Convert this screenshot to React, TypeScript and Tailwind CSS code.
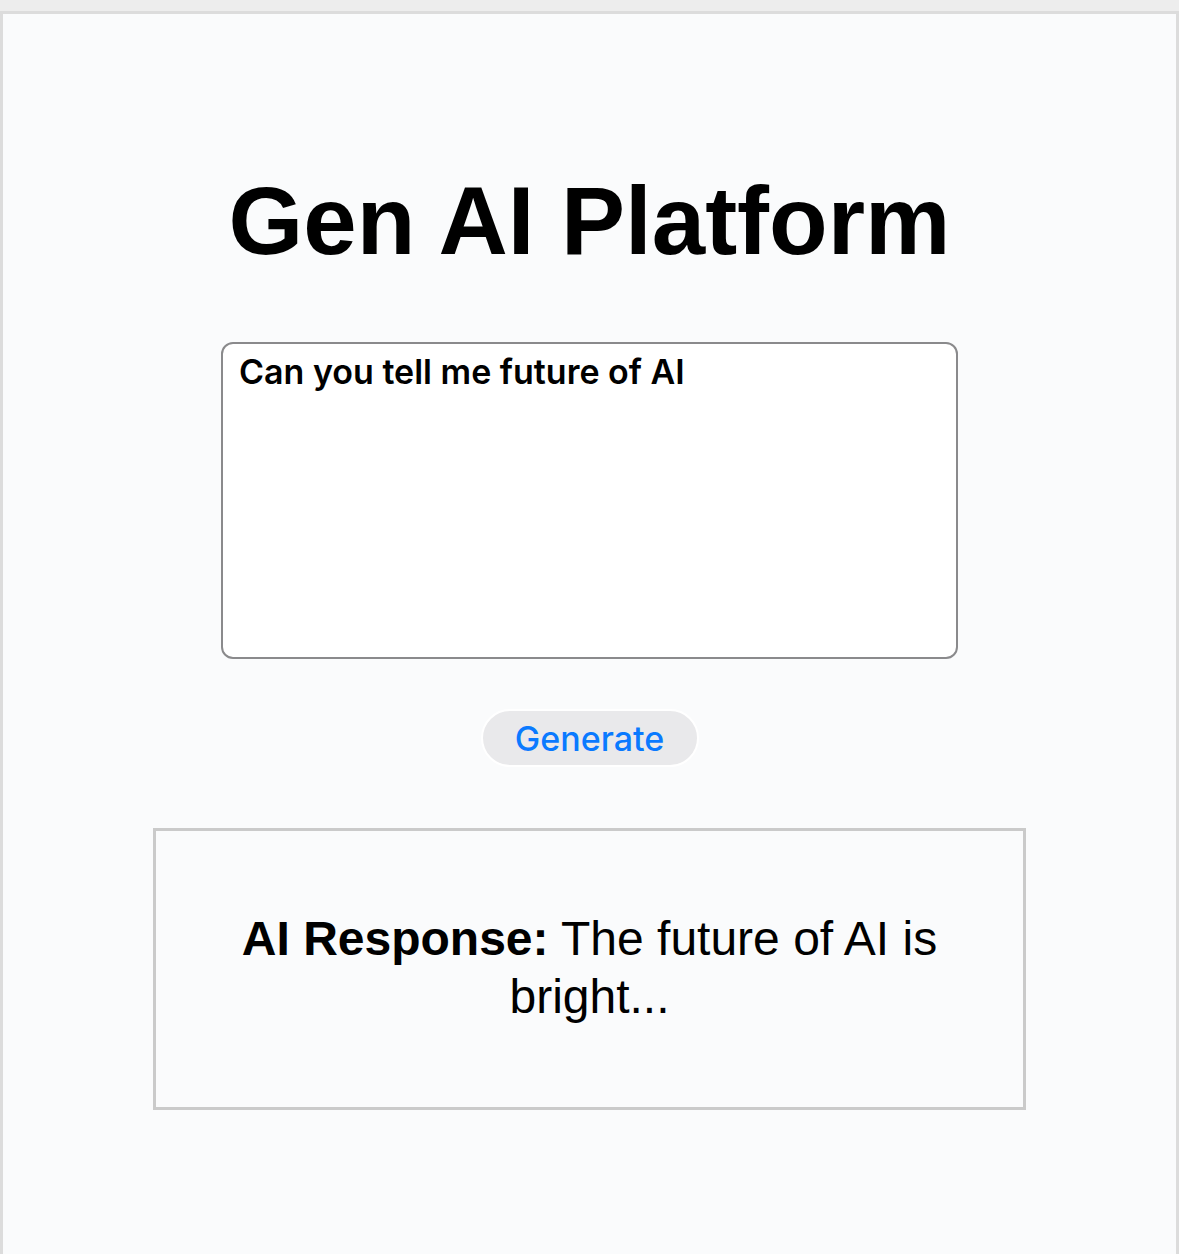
import React from "react";

export default function App() {
  return (
    <div className="min-h-[1254px] bg-[#ededed] pt-[11px] font-['Liberation_Sans',Arial,sans-serif]">
      <div className="flex min-h-[1243px] flex-col items-center border-[3px] border-b-0 border-[#dcdcdc] bg-[#fafbfc] pt-[153px]">
        <h1 className="text-[96px] font-bold leading-[107px] text-black">Gen AI Platform</h1>

        <textarea
          defaultValue="Can you tell me future of AI"
          className="mt-[68px] h-[317px] w-[737px] resize-none rounded-[12px] border-2 border-[#8a8a8c] bg-white px-[16px] pt-[8px] font-['Inter',sans-serif] text-[34px] font-semibold leading-[40px] text-black outline-none"
        />

        <button
          type="button"
          className="mt-[50px] h-[58px] w-[218px] rounded-full border-2 border-white bg-[#e9e9eb] font-['Inter',sans-serif] text-[34px] font-medium text-[#0a7aff]"
        >
          Generate
        </button>

        <div className="mt-[61px] w-[873px] border-[3px] border-[#cacaca] px-[30px] pt-[31px] pb-[33px] text-center">
          <p className="my-[48px] text-[48px] leading-[58px] text-black">
            <strong className="font-bold">AI Response:</strong> The future of AI is bright...
          </p>
        </div>
      </div>
    </div>
  );
}
